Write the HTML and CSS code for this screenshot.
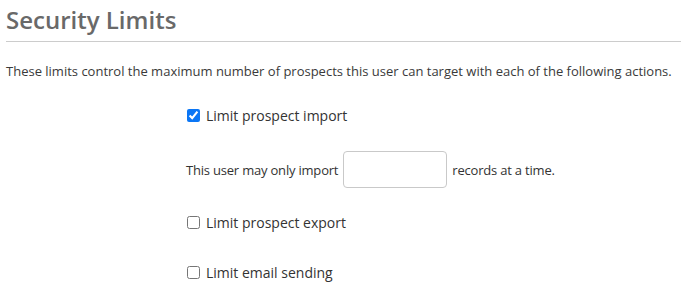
FILE: index.html
```html
<!DOCTYPE html>
<html lang="en">
<head>
    <meta charset="UTF-8">
    <title>Security Limits</title>
    <link rel="stylesheet" href="styles.css">
</head>
<body>
    <div class="section">
        <h1>Security Limits</h1>
        <p class="intro">These limits control the maximum number of prospects this user can target with each of the following actions.</p>
        <div class="limits">
            <label class="check-row"><input type="checkbox" checked> Limit prospect import</label>
            <div class="amount-row">
                <span>This user may only import</span>
                <input type="text" class="amount">
                <span>records at a time.</span>
            </div>
            <label class="check-row"><input type="checkbox"> Limit prospect export</label>
            <label class="check-row"><input type="checkbox"> Limit email sending</label>
        </div>
    </div>
</body>
</html>
```

FILE: styles.css
```css
* { margin: 0; padding: 0; box-sizing: border-box; }
body { font-family: "Open Sans", sans-serif; background: #fff; color: #333; }
.section { padding: 0 1px 0 6px; }
h1 { font-size: 24px; font-weight: 600; color: #696969; line-height: 32px; padding: 4px 0 5px; border-bottom: 1px solid #ccc; }
.intro { font-size: 13px; margin-top: 20px; color: #3a3a3a; }
.limits { margin-left: 180px; display: flex; flex-direction: column; }
.check-row { display: flex; align-items: center; gap: 6px; font-size: 14px; color: #333; }
.check-row input { width: 13px; height: 13px; margin: 0 0 0 1px; accent-color: #0b76f5; }
.limits .check-row:first-child { margin-top: 26px; }
.amount-row { display: flex; align-items: center; gap: 4px; font-size: 13px; margin: 26px 0 25px; letter-spacing: -0.2px; }
.amount { width: 104px; height: 37px; border: 1px solid #c9c9c9; border-radius: 4px; margin: 0 1px; }
.check-row + .check-row { margin-top: 31px; }
```
